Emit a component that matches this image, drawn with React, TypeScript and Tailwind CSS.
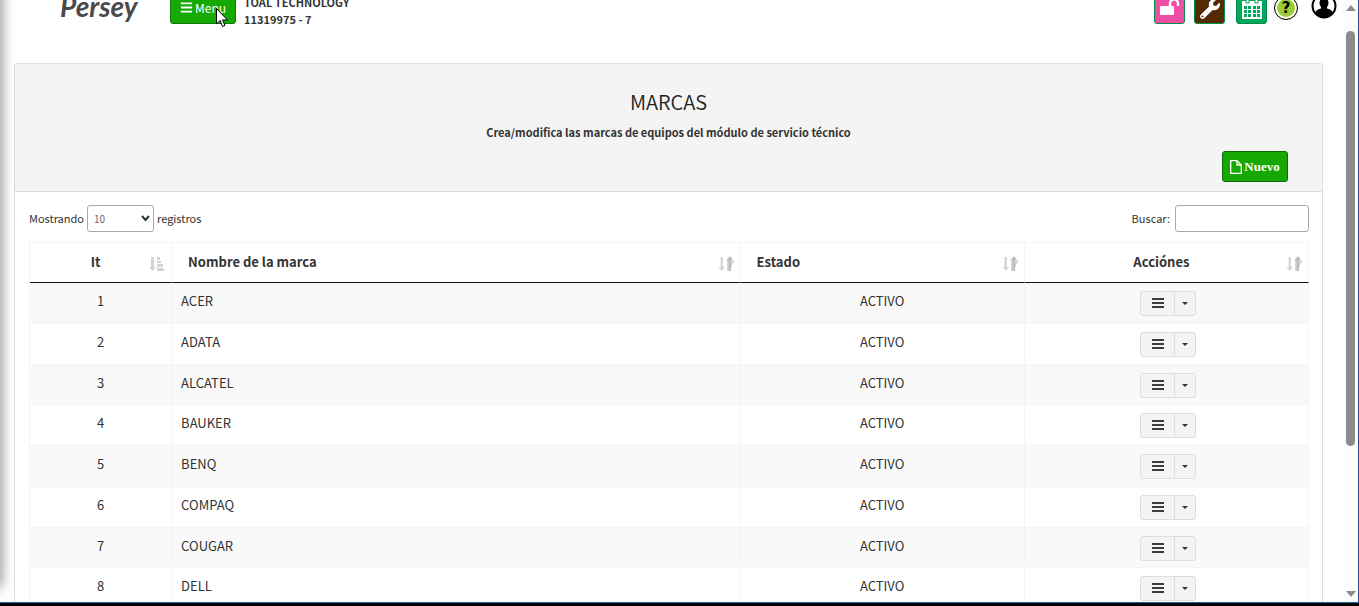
import { useState } from 'react';
import type { ReactNode } from 'react';
import { clsx } from 'clsx';
import { FaBars, FaWrench } from 'react-icons/fa';

type SortKind = 'asc' | 'both';

const columns: { label: string; width: string; align: string; sort: SortKind }[] = [
  { label: 'It', width: 'w-1/9', align: 'text-center', sort: 'asc' },
  { label: 'Nombre de la marca', width: 'w-4/9', align: 'text-left', sort: 'both' },
  { label: 'Estado', width: 'w-2/9', align: 'text-left', sort: 'both' },
  { label: 'Acciónes', width: 'w-2/9', align: 'text-center', sort: 'both' },
];

const brands = ['ACER', 'ADATA', 'ALCATEL', 'BAUKER', 'BENQ', 'COMPAQ', 'COUGAR', 'DELL', 'EPSON', 'GENIUS'];

function SortIcon({ kind }: { kind: SortKind }) {
  if (kind === 'asc') {
    return (
      <svg width="16" height="16" viewBox="0 0 16 16" fill="#d3d3d3" aria-hidden="true">
        <path d="M2 1h3v10h2l-3.500 4L0 11h2z" />
        <path d="M8 1h3v3H8zM8 5h4v2H8zM8 8h6v3H8zM8 12h7v3H8z" />
      </svg>
    );
  }
  return (
    <svg width="16" height="16" viewBox="0 0 16 16" aria-hidden="true">
      <path d="M2.500 1h2.500v10h2l-3.200 4L0.500 11h2z" fill="#d6d6d6" />
      <path d="M8 5h8v2h-1v1h-1v3h-2v4H9V6z" fill="#d6d6d6" />
      <path d="M12 0l3.500 4.500H13V15h-2.500V4.500H8z" fill="#bdbdbd" />
    </svg>
  );
}

function UnlockIcon() {
  return (
    <svg width="20" height="18" viewBox="0 0 20 18" aria-hidden="true">
      <rect y="8" width="14" height="9" rx="1" fill="#fff" />
      <path d="M10 9V5.500a4 4 0 0 1 8 0V8" fill="none" stroke="#fff" strokeWidth="2.400" />
    </svg>
  );
}

function CalendarIcon() {
  return (
    <svg width="20" height="22" viewBox="0 0 20 22" aria-hidden="true">
      <path d="M0 4h20v18H0z" fill="#fff" />
      <path d="M4 1h3v5H4zM13 1h3v5h-3z" fill="#fff" stroke="#00a65a" />
      <path
        d="M2 9h3v3H2zM6 9h3v3H6zM11 9h3v3h-3zM15 9h3v3h-3zM2 13h3v3H2zM6 13h3v3H6zM11 13h3v3h-3zM15 13h3v3h-3zM2 17h3v3H2zM6 17h3v3H6zM11 17h3v3h-3zM15 17h3v3h-3z"
        fill="#00a65a"
      />
    </svg>
  );
}

function UserIcon() {
  return (
    <svg width="26" height="26" viewBox="0 0 26 26" aria-hidden="true">
      <circle cx="13" cy="13" r="11.500" fill="#fff" stroke="#000" strokeWidth="2" />
      <path d="M4 20c1-3 4-4 6-4.500V14C7.500 11 8 5 13 5s5.500 6 3 9v1.500c2 .5 5 1.500 6 4.500-2 3-5.500 5-9 5s-7-2-9-5z" />
    </svg>
  );
}

function FileIcon() {
  return (
    <svg width="12" height="14" viewBox="0 0 12 14" fill="none" stroke="#fff" strokeWidth="1.300" aria-hidden="true">
      <path d="M.7.7h6.300l4.300 4.300v8.300H.7z" />
      <path d="M7 .7V5h4.300" />
    </svg>
  );
}

function Tile({ label, color, children }: { label: string; color: string; children: ReactNode }) {
  return (
    <button
      aria-label={label}
      className={clsx('flex h-[34px] w-[31px] items-end justify-center rounded-[3px] border border-[#008d4c] text-white', color)}
    >
      {children}
    </button>
  );
}

function TopBar() {
  return (
    <header className="-mr-[14px] flex h-6 items-end">
      <a href="#inicio" className="mb-[5px] ml-[46px] w-[110px] font-[Lato] text-[28px] leading-[26px] font-bold text-[#4a4a4a] italic">
        Persey
      </a>
      <button className="flex h-[34px] w-[66px] items-end justify-center gap-[2px] rounded-[3px] border border-[#0a7a0a] bg-[#16a904] pb-[6px] text-[12px] leading-[18px] text-white">
        <FaBars className="mb-[3px] size-[13px]" />
        Menu
      </button>
      <p className="-mb-1 ml-2 text-[11px] leading-[17px] font-bold">
        TOAL TECHNOLOGY
        <br />
        11319975 - 7
      </p>
      <nav className="ml-auto flex items-end">
        <Tile label="Desbloquear" color="bg-[#ee4fa5] pb-[7px]">
          <UnlockIcon />
        </Tile>
        <div className="ml-[9px]">
          <Tile label="Herramientas" color="bg-[#572a06] pb-[4px]">
            <FaWrench className="size-5" />
          </Tile>
        </div>
        <div className="ml-[11px]">
          <Tile label="Calendario" color="bg-[#00a65a] pb-[4px]">
            <CalendarIcon />
          </Tile>
        </div>
        <button
          aria-label="Ayuda"
          className="mb-[4px] ml-[7px] flex size-[24px] items-center justify-center rounded-full border border-black bg-[#9acd32] font-['DejaVu_Sans'] text-[15px] font-bold text-black ring-2 ring-white ring-inset"
        >
          ?
        </button>
        <button aria-label="Usuario" className="mb-[5px] ml-[13px]">
          <UserIcon />
        </button>
      </nav>
    </header>
  );
}

function RowActions({ brand }: { brand: string }) {
  return (
    <div className="ml-1 inline-flex h-[25px] rounded-[3px] border border-[#ddd] bg-[#f4f4f4] align-top text-[#333]">
      <button aria-label={`Opciones ${brand}`} className="flex w-[33px] items-center justify-center pb-[2px]">
        <svg width="12" height="10" viewBox="0 0 12 10" aria-hidden="true">
          <path d="M0 0h12v2H0zM0 4h12v2H0zM0 8h12v2H0z" fill="#3c3c3c" />
        </svg>
      </button>
      <button aria-label={`Desplegar ${brand}`} className="flex w-[21px] items-center justify-center border-l border-[#ddd]">
        <svg width="6" height="3" viewBox="0 0 6 3" aria-hidden="true">
          <path d="M0 0h6L3 3z" fill="#333" />
        </svg>
      </button>
    </div>
  );
}

function BrandTable({ rows }: { rows: string[] }) {
  return (
    <table className="mt-[10px] w-full table-fixed border-separate border-spacing-0 border-t border-l border-[#f4f4f4] text-[13px] leading-5">
      <thead>
        <tr>
          {columns.map((c) => (
            <th
              key={c.label}
              className={clsx('relative h-10 border-r border-b border-r-[#f4f4f4] border-b-[#111] pr-[26px] pb-[2px] pl-4 font-bold', c.width, c.align)}
            >
              {c.label}
              <span className="absolute right-[6px] bottom-[10px] leading-none">
                <SortIcon kind={c.sort} />
              </span>
            </th>
          ))}
        </tr>
      </thead>
      <tbody>
        {rows.map((brand, i) => (
          <tr
            key={brand}
            className="h-[41px] odd:bg-[#f9f9f9] nth-[4n+3]:h-[40px] [&>td]:border-r [&>td]:border-b [&>td]:border-[#f4f4f4] [&>td]:pt-2 [&>td]:align-top"
          >
            <td className="text-center">{i + 1}</td>
            <td className="pl-[9px]">{brand}</td>
            <td className="text-center">ACTIVO</td>
            <td className="text-center">
              <RowActions brand={brand} />
            </td>
          </tr>
        ))}
      </tbody>
    </table>
  );
}

function Scrollbar() {
  return (
    <div className="flex w-[15px] shrink-0 flex-col items-center bg-[#fcfcfc] py-[5px]" aria-hidden="true">
      <svg width="10" height="6" viewBox="0 0 10 6">
        <path d="M5 0l5 6H0z" fill="#8b8b8b" />
      </svg>
      <div className="mt-[20px] h-[415px] w-[9px] rounded-full bg-[#8b8b8b]" />
      <svg className="mt-auto" width="10" height="6" viewBox="0 0 10 6">
        <path d="M0 0h10L5 6z" fill="#8b8b8b" />
      </svg>
    </div>
  );
}

export default function App() {
  const [search, setSearch] = useState('');
  const rows = brands.filter((b) => b.includes(search.toUpperCase()));

  return (
    <div className="relative flex h-screen flex-col overflow-hidden border-b-[3px] border-black bg-white font-['Noto_Sans_CJK_SC',sans-serif] text-[#333]">
      <div className="flex min-h-0 flex-1 overflow-hidden border-r border-b border-r-[#2a4a8c] border-b-[#1c5f9e]">
        <div className="min-w-0 flex-1 overflow-hidden pr-[20px] pl-[14px]">
          <TopBar />
          <main className="mt-[39px] rounded-[3px] border border-[#ddd]">
            <div className="border-b border-[#ddd] bg-[#f4f4f4] px-[34px] pt-6 pb-[9px] text-center">
              <h1 className="text-[20px] leading-7 font-[350] text-[#222]">MARCAS</h1>
              <p className="mt-[6px] text-[11px] leading-5 font-bold">
                Crea/modifica las marcas de equipos del módulo de servicio técnico
              </p>
              <div className="mt-[9px] flex justify-end">
                <button className="flex h-[31px] w-[66px] items-center justify-center gap-[2px] rounded-[3px] border border-[#0a6b0a] bg-[#16a904] font-['Liberation_Serif',serif] text-[13px] font-bold text-white">
                  <FileIcon />
                  Nuevo
                </button>
              </div>
            </div>
            <div className="pt-[13px] pr-[13px] pl-[14px] text-[11px]">
              <div className="flex items-center justify-between">
                <label className="flex items-center gap-[3px]">
                  Mostrando
                  <span className="relative">
                    <select
                      defaultValue="10"
                      className="h-[27px] w-[67px] appearance-none rounded-[3px] border border-[#aaa] bg-white pl-[6px] text-[10px] text-[#666]"
                    >
                      <option>10</option>
                      <option>25</option>
                      <option>50</option>
                      <option>100</option>
                    </select>
                    <svg className="pointer-events-none absolute top-[10px] right-[4px]" width="9" height="7" viewBox="0 0 9 7" aria-hidden="true">
                      <path d="M1 1l3.500 4L8 1" fill="none" stroke="#333" strokeWidth="2" />
                    </svg>
                  </span>
                  registros
                </label>
                <label className="flex items-center gap-[5px]">
                  Buscar:
                  <input
                    value={search}
                    onChange={(e) => setSearch(e.target.value)}
                    className="h-[27px] w-[134px] rounded-[3px] border border-[#aaa] bg-white px-1"
                  />
                </label>
              </div>
              <BrandTable rows={rows} />
            </div>
          </main>
        </div>
        <Scrollbar />
      </div>

      {/* sombra del menú lateral oculto */}
      <div className="pointer-events-none absolute top-[-20px] bottom-[16px] left-[-10px] w-[10px] shadow-[0_0_14px_rgba(0,0,0,0.6)]" />

      {/* puntero */}
      <svg className="pointer-events-none absolute top-[8px] left-[216px]" width="12" height="19" viewBox="0 0 12 19" aria-hidden="true">
        <path d="M.5.500v15.500l3.500-3.500 2.500 6 2.500-1-2.500-5.500h5z" fill="#fff" stroke="#000" />
      </svg>
    </div>
  );
}
